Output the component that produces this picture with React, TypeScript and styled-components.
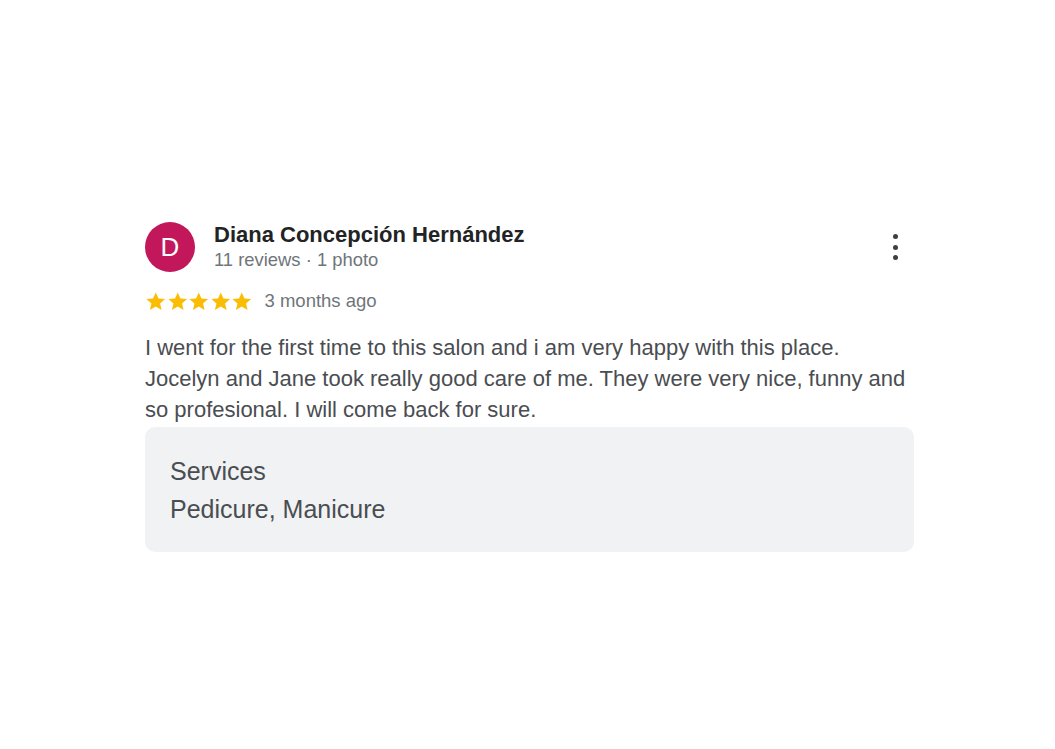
import styled, { createGlobalStyle } from 'styled-components';

const GlobalStyle = createGlobalStyle`
  html, body {
    margin: 0;
    padding: 0;
    background: #ffffff;
    font-family: "Liberation Sans", Arial, sans-serif;
  }
`;

const Page = styled.div`
  width: 1055px;
  height: 749px;
  padding: 222px 0 0 145px;
  box-sizing: border-box;
`;

const Review = styled.div`
  width: 769px;
  display: flex;
  flex-direction: column;
`;

const Header = styled.div`
  display: flex;
  align-items: flex-start;
`;

const Avatar = styled.div`
  width: 50px;
  height: 50px;
  border-radius: 50%;
  background: #c2185b;
  color: #fff;
  font-size: 26px;
  display: flex;
  align-items: center;
  justify-content: center;
  flex-shrink: 0;
`;

const Author = styled.div`
  margin-left: 19px;
  flex: 1;
`;

const Name = styled.div`
  font-size: 22px;
  font-weight: 700;
  color: #222325;
  line-height: 25px;
`;

const Meta = styled.div`
  font-size: 18.4px;
  color: #70757a;
  line-height: 22px;
  margin-top: 2px;
`;

const MoreButton = styled.button`
  border: none;
  background: none;
  padding: 0;
  margin: 12px 13px 0 0;
  width: 12px;
  height: 26px;
  display: flex;
  flex-direction: column;
  align-items: center;
  justify-content: space-between;
  cursor: pointer;
`;

const Dot = styled.span`
  width: 5px;
  height: 5px;
  border-radius: 50%;
  background: #3c4043;
`;

const RatingRow = styled.div`
  display: flex;
  align-items: center;
  margin-top: 18px;
  gap: 12px;
`;

const Stars = styled.div`
  display: flex;
`;

const When = styled.span`
  font-size: 18.5px;
  line-height: 22px;
  color: #70757a;
`;

const Body = styled.p`
  margin: 20px 0 0;
  font-size: 22px;
  line-height: 31px;
  color: #4a4d51;
`;

const ServicesBox = styled.div`
  margin-top: 2px;
  background: #f1f2f4;
  border-radius: 10px;
  padding: 29px 25px 28px;
  display: flex;
  flex-direction: column;
  gap: 8px;
`;

const ServiceLine = styled.div`
  font-size: 25px;
  line-height: 30px;
  color: #4a4d51;
`;

function Star() {
  return (
    <svg width="21.5" height="21" viewBox="0 0 24 24">
      <path
        fill="#fbbc04"
        d="M12 1.6l3.1 7 7.6.6-5.8 5 1.8 7.5L12 17.8l-6.7 3.9 1.8-7.5-5.8-5 7.6-.6z"
      />
    </svg>
  );
}

export default function App() {
  return (
    <>
      <GlobalStyle />
      <Page>
        <Review>
          <Header>
            <Avatar>D</Avatar>
            <Author>
              <Name>Diana Concepción Hernández</Name>
              <Meta>11 reviews · 1 photo</Meta>
            </Author>
            <MoreButton aria-label="More">
              <Dot />
              <Dot />
              <Dot />
            </MoreButton>
          </Header>
          <RatingRow>
            <Stars>
              {[0, 1, 2, 3, 4].map(i => (
                <Star key={i} />
              ))}
            </Stars>
            <When>3 months ago</When>
          </RatingRow>
          <Body>
            I went for the first time to this salon and i am very happy with this place. Jocelyn and Jane
            took really good care of me. They were very nice, funny and so profesional. I will come back
            for sure.
          </Body>
          <ServicesBox>
            <ServiceLine>Services</ServiceLine>
            <ServiceLine>Pedicure, Manicure</ServiceLine>
          </ServicesBox>
        </Review>
      </Page>
    </>
  );
}
